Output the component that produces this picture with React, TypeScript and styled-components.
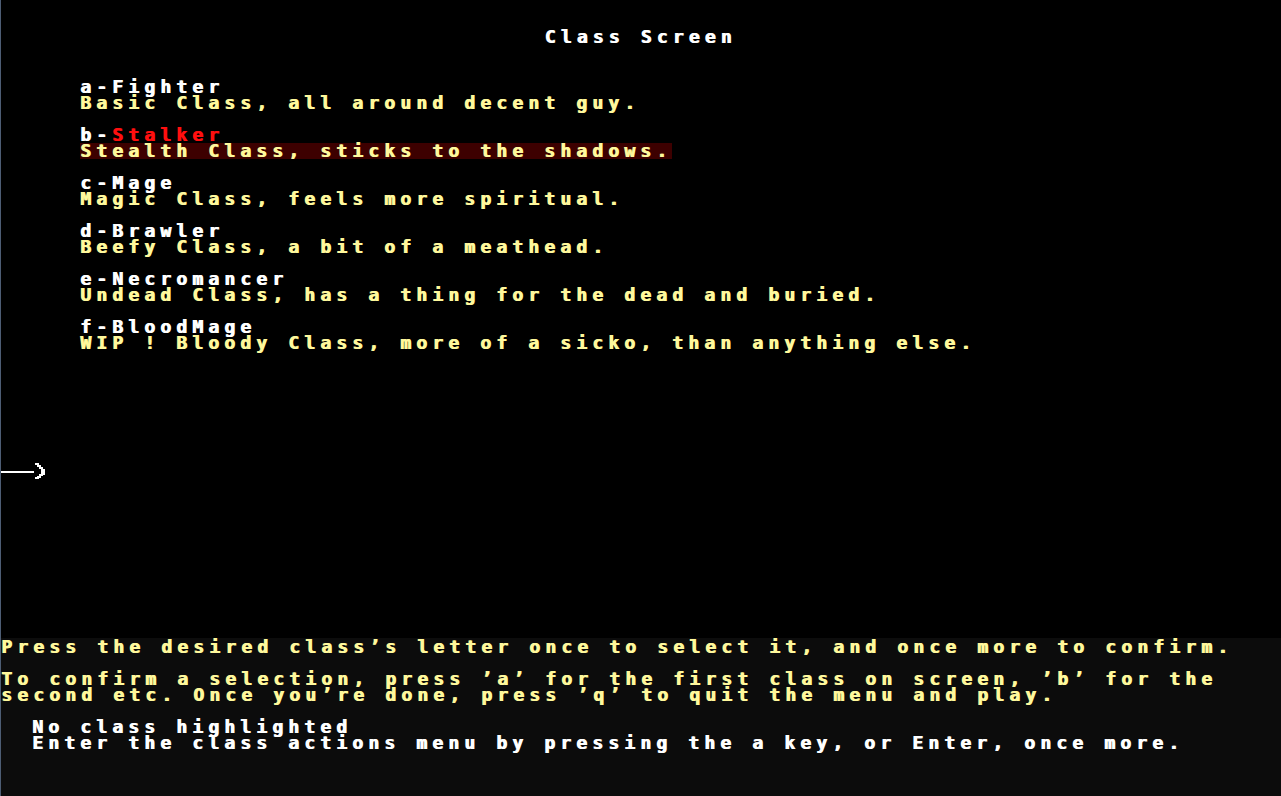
import React from "react";
import styled, { createGlobalStyle } from "styled-components";

const Global = createGlobalStyle`
  html, body { margin: 0; padding: 0; background: #000; }
  body { overflow: hidden; }
`;

const YELLOW = "#fff89c";
const WHITE = "#ffffff";
const RED = "#ff0f0f";

const Screen = styled.div`
  width: 1281px;
  height: 796px;
  box-sizing: border-box;
  border-left: 1px solid #4d5d74;
  display: flex;
  flex-direction: column;
  font-family: "DejaVu Sans Mono", "Liberation Mono", monospace;
  font-weight: bold;
  font-size: 18px;
  line-height: 16px;
  letter-spacing: calc(16px - 1ch);
  white-space: pre;
  background: #000;
`;

const Main = styled.div`
  height: 638px;
  background: #000;
  display: flex;
  flex-direction: column;
`;

const Title = styled.div`
  margin-top: 29px;
  height: 16px;
  text-align: center;
  color: ${WHITE};
  text-shadow: 1px 0 0 currentColor;
  padding-right: 1px;
`;

const ClassList = styled.div`
  margin-top: 34px;
  padding-left: 79px;
  display: flex;
  flex-direction: column;
  gap: 16px;
  align-items: flex-start;
`;

const Entry = styled.div`
  display: flex;
  flex-direction: column;
  align-items: flex-start;
`;

const Line = styled.div<{ $color?: string; $bg?: string }>`
  height: 16px;
  color: ${(p) => p.$color ?? YELLOW};
  background: ${(p) => p.$bg ?? "transparent"};
  text-shadow: 1px 0 0 currentColor;
`;

const Name = styled.span<{ $selected?: boolean }>`
  color: ${(p) => (p.$selected ? RED : WHITE)};
`;

const Prompt = styled.div`
  margin-top: 112px;
  height: 16px;
  display: flex;
  align-items: flex-start;
`;

const Footer = styled.div`
  flex: 1;
  background: #0c0c0c;
  padding-top: 1px;
  display: flex;
  flex-direction: column;
  gap: 16px;
`;

const Block = styled.div<{ $indent?: number }>`
  display: flex;
  flex-direction: column;
  padding-left: ${(p) => p.$indent ?? 0}px;
`;

const classes = [
  { key: "a", name: "Fighter", desc: "Basic Class, all around decent guy." },
  { key: "b", name: "Stalker", desc: "Stealth Class, sticks to the shadows.", selected: true },
  { key: "c", name: "Mage", desc: "Magic Class, feels more spiritual." },
  { key: "d", name: "Brawler", desc: "Beefy Class, a bit of a meathead." },
  { key: "e", name: "Necromancer", desc: "Undead Class, has a thing for the dead and buried." },
  { key: "f", name: "BloodMage", desc: "WIP ! Bloody Class, more of a sicko, than anything else." },
];

const Arrow = () => (
  <svg width="46" height="16" viewBox="0 0 46 16" shapeRendering="crispEdges">
    <rect x="0" y="8" width="33" height="2" fill="#fff" />
    <rect x="34" y="0" width="4" height="2" fill="#fff" />
    <rect x="36" y="2" width="4" height="2" fill="#fff" />
    <rect x="38" y="4" width="4" height="2" fill="#fff" />
    <rect x="40" y="6" width="4" height="6" fill="#fff" />
    <rect x="38" y="11" width="4" height="2" fill="#fff" />
    <rect x="36" y="13" width="4" height="2" fill="#fff" />
    <rect x="34" y="14" width="4" height="2" fill="#fff" />
  </svg>
);

export default function App() {
  return (
    <>
      <Global />
      <Screen>
        <Main>
          <Title>Class Screen</Title>
          <ClassList>
            {classes.map((c) => (
              <Entry key={c.key}>
                <Line $color={WHITE}>
                  {c.key}-<Name $selected={c.selected}>{c.name}</Name>
                </Line>
                <Line $bg={c.selected ? "#3d0000" : undefined}>{c.desc}</Line>
              </Entry>
            ))}
          </ClassList>
          <Prompt>
            <Arrow />
          </Prompt>
        </Main>
        <Footer>
          <Block>
            <Line>Press the desired class’s letter once to select it, and once more to confirm.</Line>
          </Block>
          <Block>
            <Line>To confirm a selection, press ’a’ for the first class on screen, ’b’ for the</Line>
            <Line>second etc. Once you’re done, press ’q’ to quit the menu and play.</Line>
          </Block>
          <Block $indent={31}>
            <Line $color={WHITE}>No class highlighted</Line>
            <Line $color={WHITE}>Enter the class actions menu by pressing the a key, or Enter, once more.</Line>
          </Block>
        </Footer>
      </Screen>
    </>
  );
}
